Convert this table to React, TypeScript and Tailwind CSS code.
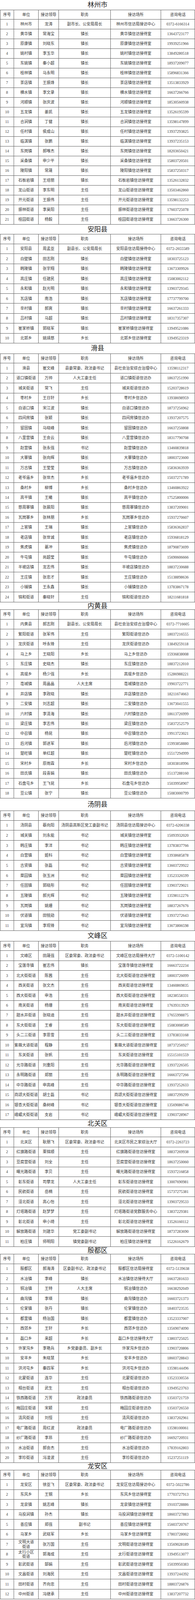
import React from 'react'

type Section = {
  name: string
  titleH: string
  rowH: string
  rows: string[]
}

// The capture window tops out at 4096px, so every row height is the
// reference height times 4096/4654 to keep the whole list in frame.
// unit | leader | post | place | phone
const sections: Section[] = [
  {
    name: '林州市',
    titleH: 'h-[24.64px]',
    rowH: 'h-[24.99px]',
    rows: [
      '林州市|龙涛|副市长、公安局局长|林州市信访局接访中心|0372-6166314',
      '黄华镇|常海宝|镇长|黄华镇信访接待室|13643723177',
      '原康镇|刘晓东|镇长|原康镇信访接待室|19939251966',
      '姚村镇|李玉华|镇长|姚村镇信访接待室|13849280518',
      '东姚镇|秦小超|镇长|东姚镇信访接待室|18937209077',
      '桂林镇|马永明|镇长|桂林镇信访接待室|15896831366',
      '茶店镇|王振烽|镇长|茶店镇信访接待室|13513833929',
      '横水镇|李文录|镇长|横水镇信访接待室|16637266766',
      '河顺镇|张庆波|镇长|河顺镇信访接待室|18530560938',
      '五龙镇|姜凯|镇长|五龙镇信访接待室|13526195599',
      '合涧镇|丁健|镇长|合涧镇信访接待室|13598147899',
      '任村镇|侯成山|镇长|任村镇信访接待室|13937293825',
      '临淇镇|张鹏|镇长|临淇镇信访接待室|13937235153',
      '东岗镇|郝唯杰|镇长|东岗镇信访接待室|18203650421',
      '采桑镇|申少平|镇长|采桑镇信访接待室|15803720501',
      '陵阳镇|常晟|镇长|陵阳镇信访接待室|15837250317',
      '石板岩镇|王培丽|镇长|石板岩镇信访接待室|13526132832',
      '龙山街道|李东明|主任|龙山街道信访接待室|13503462860',
      '开元街道|王振伟|主任|开元街道信访接待室|13598132253',
      '振林街道|李昊阳|主任|振林街道信访接待室|17603725078',
      '桂园街道|杨毅|主任|桂园街道信访接待室|13663726300',
    ],
  },
  {
    name: '安阳县',
    titleH: 'h-[24.64px]',
    rowH: 'h-[25.43px]',
    rows: [
      '安阳县|周孟亚|副县长、公安局局长|安阳县信访局接待中心|0372-2655589',
      '白壁镇|田志刚|镇长|白壁镇信访接待室|18303725123',
      '韩陵镇|张宇翔|镇长|韩陵镇信访接待室|13673309926',
      '高庄镇|任建民|镇长|高庄镇信访接待室|15083002112',
      '永和镇|赵光明|镇长|永和镇信访接待室|13903729345',
      '瓦店镇|南浩|镇长|瓦店镇信访接待室|17737799700',
      '辛村镇|郝爽|镇长|辛村镇信访接待室|16637261333',
      '吕村镇|马超|镇长|吕村镇信访接待室|18317357307',
      '崔家桥镇|郭晓军|镇长|崔家桥镇信访接待室|13949521086',
      '北郭乡|姚靖慈|乡长|北郭乡信访接待室|13949523319',
    ],
  },
  {
    name: '滑县',
    titleH: 'h-[25.52px]',
    rowH: 'h-[25.49px]',
    rows: [
      '滑县|崔文峰|县委常委、政法委书记|县社会治安综合治理中心|13598112317',
      '道口镇街道|万帅|人大工委主任|道口镇街道信访办|18637251990',
      '城关街道|常飞|主任|城关街道信访办|15203728619',
      '枣村乡|王日轩|乡长|枣村乡信访办|13938698959',
      '白道口镇|宋江波|镇长|白道口镇信访办|18737256962',
      '四间房镇|张颖|镇长|四间房镇信访办|13937207575',
      '留固镇|马晓峰|镇长|留固镇信访办|16637250808',
      '八里营镇|王会云|镇长|八里营镇信访办|18317790708',
      '赵营镇|张永强|书记|赵营镇信访办|13460839818',
      '大寨镇|张向辉|镇长|大寨镇信访办|18003723600',
      '万古镇|王莹莹|镇长|万古镇信访办|15836363939',
      '老爷庙乡|张世杰|乡长|老爷庙乡信访办|15037271789',
      '桑村乡|柳博|乡长|桑村乡信访办|13460863922',
      '高平镇|王曦|镇长|高平镇信访办|17525800006',
      '慈周寨镇|张晨阳|镇长|慈周寨镇信访办|13837209001',
      '瓦岗寨乡|张林朋|乡长|瓦岗寨乡信访办|15937270607',
      '上官镇|王瑞|镇长|上官镇信访办|15836362837',
      '老店镇|张世诚|镇长|老店镇信访办|15936818129',
      '焦虎镇|綦冲|镇长|焦虎镇信访办|18790873699',
      '牛屯镇|尚超莹|镇长|牛屯镇信访办|15690606666',
      '半坡店镇|龙志伟|镇长|半坡店镇信访办|18837230688',
      '王庄镇|张忠才|镇长|王庄镇信访办|15138898636',
      '小铺镇|王永鑫|镇长|小铺镇信访办|13783867178',
      '锦和街道|秦晓轩|主任|锦和街道信访办|18211681818',
    ],
  },
  {
    name: '内黄县',
    titleH: 'h-[18.48px]',
    rowH: 'h-[25.47px]',
    rows: [
      '内黄县|郝志刚|副县长、公安局局长|县社会治安综合治理中心|0372-7716605',
      '繁阳街道|张军伟|主任|繁阳街道信访办|18037216555',
      '龙庆街道|呼永锋|主任|龙庆街道信访办|13849259118',
      '马上乡|王晓阳|乡长|马上乡信访办|15936838008',
      '东庄镇|史晓杰|镇长|东庄镇信访办|18837212010',
      '高堤乡|杨少强|乡长|高堤乡信访办|15286988221',
      '亳城镇|周晶晶|人大主席|亳城镇信访办|19903722771',
      '井店镇|李政晓|镇长|井店镇信访办|18211674663',
      '二安镇|刘志超|镇长|二安镇信访办|13673041555',
      '六村镇|李清海|镇长|六村镇信访办|18613726999',
      '梁庄镇|李志伟|镇长|梁庄镇信访办|15837252579',
      '中召镇|杨昆|镇长|中召镇信访办|19913723021',
      '后河镇|郭进军|镇长|后河镇信访办|15993858880',
      '楚旺镇|单红超|镇长|楚旺镇信访办|15517294999',
      '宋村乡|原雨霖|乡长|宋村乡信访办|18303818996',
      '田氏镇|段喜娟|镇长|田氏镇信访办|15137288160',
      '石盘屯乡|王飞昆|乡长|石盘屯乡信访办|15039958907',
      '豆公镇|张宁|镇长|豆公镇信访办|15083000799',
    ],
  },
  {
    name: '汤阴县',
    titleH: 'h-[30.8px]',
    rowH: 'h-[25.7px]',
    rows: [
      '汤阴县|蔡向阳|汤阴县高新区党工委副书记|汤阴县信访局接访中心|0372-6206338',
      '城关镇|刘永能|书记|城关镇信访接待室|15093932020',
      '韩庄镇|李洋|书记|韩庄镇信访接待室|13783837766',
      '白营镇|姬科|书记|白营镇信访接待室|13938685878',
      '古贤镇|张磊|书记|古贤镇信访接待室|13603729922',
      '菜园镇|张玉洲|书记|菜园镇信访接待室|13523326599',
      '任固镇|郭晓彤|书记|任固镇信访接待室|13903729021',
      '五陵镇|郝光辉|书记|五陵镇信访接待室|13598112276',
      '瓦岗镇|姚姗|书记|瓦岗镇信访接待室|18837267676',
      '伏道镇|田锐勋|书记|伏道镇信访接待室|13937272643',
      '宜沟镇|李现锋|书记|宜沟镇信访接待室|13673806598',
    ],
  },
  {
    name: '文峰区',
    titleH: 'h-[25.52px]',
    rowH: 'h-[25.47px]',
    rows: [
      '文峰区|田晟强|区委常委、政法委书记|文峰区信访局接待大厅|0372-5100142',
      '宝莲寺镇|崔志伟|镇长|宝莲寺镇信访接待室|16663722234',
      '北大街街道|陈茜|主任|北大街街道信访接待室|18003726099',
      '西关街道|张文杰|主任|西关街道信访接待室|13460869835',
      '西大街街道|申浩|主任|西大街街道信访接待室|18238558331',
      '南关街道|杨珊|主任|南关街道信访接待室|17639313929',
      '甜水井街道|张晓迪|主任|甜水井街道信访接待室|17655998875',
      '东大街街道|王睿|主任|东大街街道信访接待室|15083008589',
      '头二三街道|李思雪|主任|头二三街道信访接待室|13783833168',
      '紫薇大道街道|程静|主任|紫薇大道街道信访接待室|18737256927',
      '东关街道|张帆|主任|东关街道信访接待室|15515101559',
      '光华路街道|刘重阳|主任|光华路街道信访接待室|13937226505',
      '永明路街道|郑丽|主任|永明路街道信访接待室|16663727266',
      '中华路街道|申高峰|主任|中华路街道信访接待室|13937252633',
      '商颂大街街道|胡士磊|书记|商颂大街街道信访接待室|18837299299',
      '银杏大街街道|桑树峰|书记|银杏大街街道信访接待室|13569086746',
      '峨嵋大街街道|支岩|书记|峨嵋大街街道信访接待室|13903728967',
    ],
  },
  {
    name: '北关区',
    titleH: 'h-[18.48px]',
    rowH: 'h-[25.52px]',
    rows: [
      '北关区|耿朋飞|区委常委、政法委书记|北关区市民之家综治大厅|0372-2263723',
      '红旗路街道|栗锦顺|主任|红旗路街道信访接待室|18837269938',
      '豆腐营街道|刘全|主任|豆腐营街道信访接待室|18637250060',
      '曙光路街道|李贝|主任|曙光路街道信访接待室|15937216858',
      '彰东街道|司攀龙|人大工委主任|彰东街道信访接待室|13007690981',
      '民航街道|岳楠|主任|民航街道信访接待室|15737275381',
      '洹北街道|高心怡|主任|洹北街道信访接待室|13903729533',
      '灯塔路街道|赵梦梦|主任|灯塔路街道党群服务中心|13837229381',
      '彰北街道|申小琦|主任|彰北街道信访接待室|13526160112',
      '解放路街道|刘建华|党工委副书记|解放路街道信访接待室|18737283690',
      '柏庄镇|师明阳|镇党委副书记|柏庄镇信访接待室|15226162679',
    ],
  },
  {
    name: '殷都区',
    titleH: 'h-[18.48px]',
    rowH: 'h-[25.48px]',
    rows: [
      '殷都区|郝海涛|区委副书记、政法委书记|殷都区信访局接待室|0372-5139638',
      '水冶镇|李峰|镇长|水冶镇信访接待大厅|16637281633',
      '铜冶镇|王特|人大主席|铜冶镇信访办|16638292049',
      '曲沟镇|李瑛|镇长|曲沟镇信访办|16603721373',
      '伦掌镇|张丹|镇长|伦掌镇信访办|18403723535',
      '都里镇|杨治国|镇长|都里镇信访办|13523337007',
      '西郊乡|王轩|乡长|西郊乡信访办|13569074090',
      '磊口乡|来超|乡长|磊口乡信访接待大厅|13803725025',
      '许家沟乡|李艳兵|乡党委委员、副乡长|许家沟乡信访办|13903720806',
      '安丰乡|朱晓慧|乡长|安丰乡信访办|18603728843',
      '洪河屯乡|秦四军|乡长|洪河屯乡信访办|13598144496',
      '北蒙街道|连华|主任|北蒙街道信访办|13523330556',
      '相台街道|武生|主任|相台街道信访办|13949523763',
      '铁西路街道|万芳|政法委员|铁西路街道信访办|13503721759',
      '梅园庄街道|宋颖|主任|梅园庄街道信访办|13503726550',
      '清风街道|刘恒|主任|清风街道信访办|13837202961',
      '电厂路街道|周红波|政法委员|电厂路街道信访办|13598100061',
      '纱厂路街道|李昂|主任|纱厂路街道信访办|16692720931',
      '水冶街道|郝会杰|主任|水冶街道信访办|17839162803',
      '李珍街道|冯凌波|主任|李珍街道信访办|15237251119',
    ],
  },
  {
    name: '龙安区',
    titleH: 'h-[17.6px]',
    rowH: 'h-[25.52px]',
    rows: [
      '龙安区|徐亚飞|区委常委、政法委书记|龙安区信访局接访中心|0372-5022786',
      '东风乡|王钢|乡长|东风乡信访接待室|17703727913',
      '龙泉镇|姚志峰|镇长|龙泉镇信访接待室|19103728886',
      '马投涧镇|孙杰|镇长|马投涧镇信访接待室|18603727883',
      '善应镇|郑强|副书记|善应镇信访接待室|15603720767',
      '马家乡|武晓军|乡长|马家乡信访接待室|17803728002',
      '文明大道\n街道|张万国|主任|文明街道信访接待室|13569028189',
      '太行小区\n街道|郭海成|主任|太行街道信访接待室|13949513077',
      '彰武街道|郜娟|主任|彰武街道信访接待室|15039950383',
      '文昌街道|刘海民|主任|文昌街道信访接待室|13937244392',
      '田村街道|齐向忠|主任|田村街道信访接待室|18803726876',
      '中州街道|冯继承|主任|中州街道信访接待室|13837207732',
    ],
  },
]

const headers = ['序号', '单位', '接访领导', '职务', '接访场所', '咨询电话']

const gridCols = 'grid grid-cols-[36px_63px_52px_133px_129px_87px]'

function Cell({ children, first }: { children: React.ReactNode; first?: boolean }): React.ReactElement {
  return (
    <div
      className={`flex items-center justify-center text-center whitespace-pre-line leading-[11.5px] border-r border-b border-[#5e5e5e] ${first ? 'border-l' : ''}`}
    >
      {children}
    </div>
  )
}

function SectionTable({ section }: { section: Section }): React.ReactElement {
  return (
    <div>
      {/* Title */}
      <div className={`${section.titleH} flex items-center justify-center text-[17px] leading-none text-[#1e1e1e]`}>
        {section.name}
      </div>

      {/* Header */}
      <div className={`${gridCols} h-[25.52px] border-t border-[#5e5e5e]`}>
        {headers.map((h, i) => (
          <Cell key={h} first={i === 0}>{h}</Cell>
        ))}
      </div>

      {/* Rows */}
      {section.rows.map((row, idx) => {
        const cols = row.split('|')
        return (
          <div key={idx} className={`${gridCols} ${section.rowH}`}>
            <Cell first>{idx + 1}</Cell>
            {cols.map((c, i) => (
              <Cell key={i}>{c}</Cell>
            ))}
          </div>
        )
      })}
    </div>
  )
}

export default function App(): React.ReactElement {
  return (
    <div
      className="w-[500px] bg-white text-[10px] text-[#3a3a3a]"
      style={{ fontFamily: '"Liberation Serif", "Noto Sans CJK SC", serif' }}
    >
      {sections.map((s) => (
        <SectionTable key={s.name} section={s} />
      ))}
    </div>
  )
}
